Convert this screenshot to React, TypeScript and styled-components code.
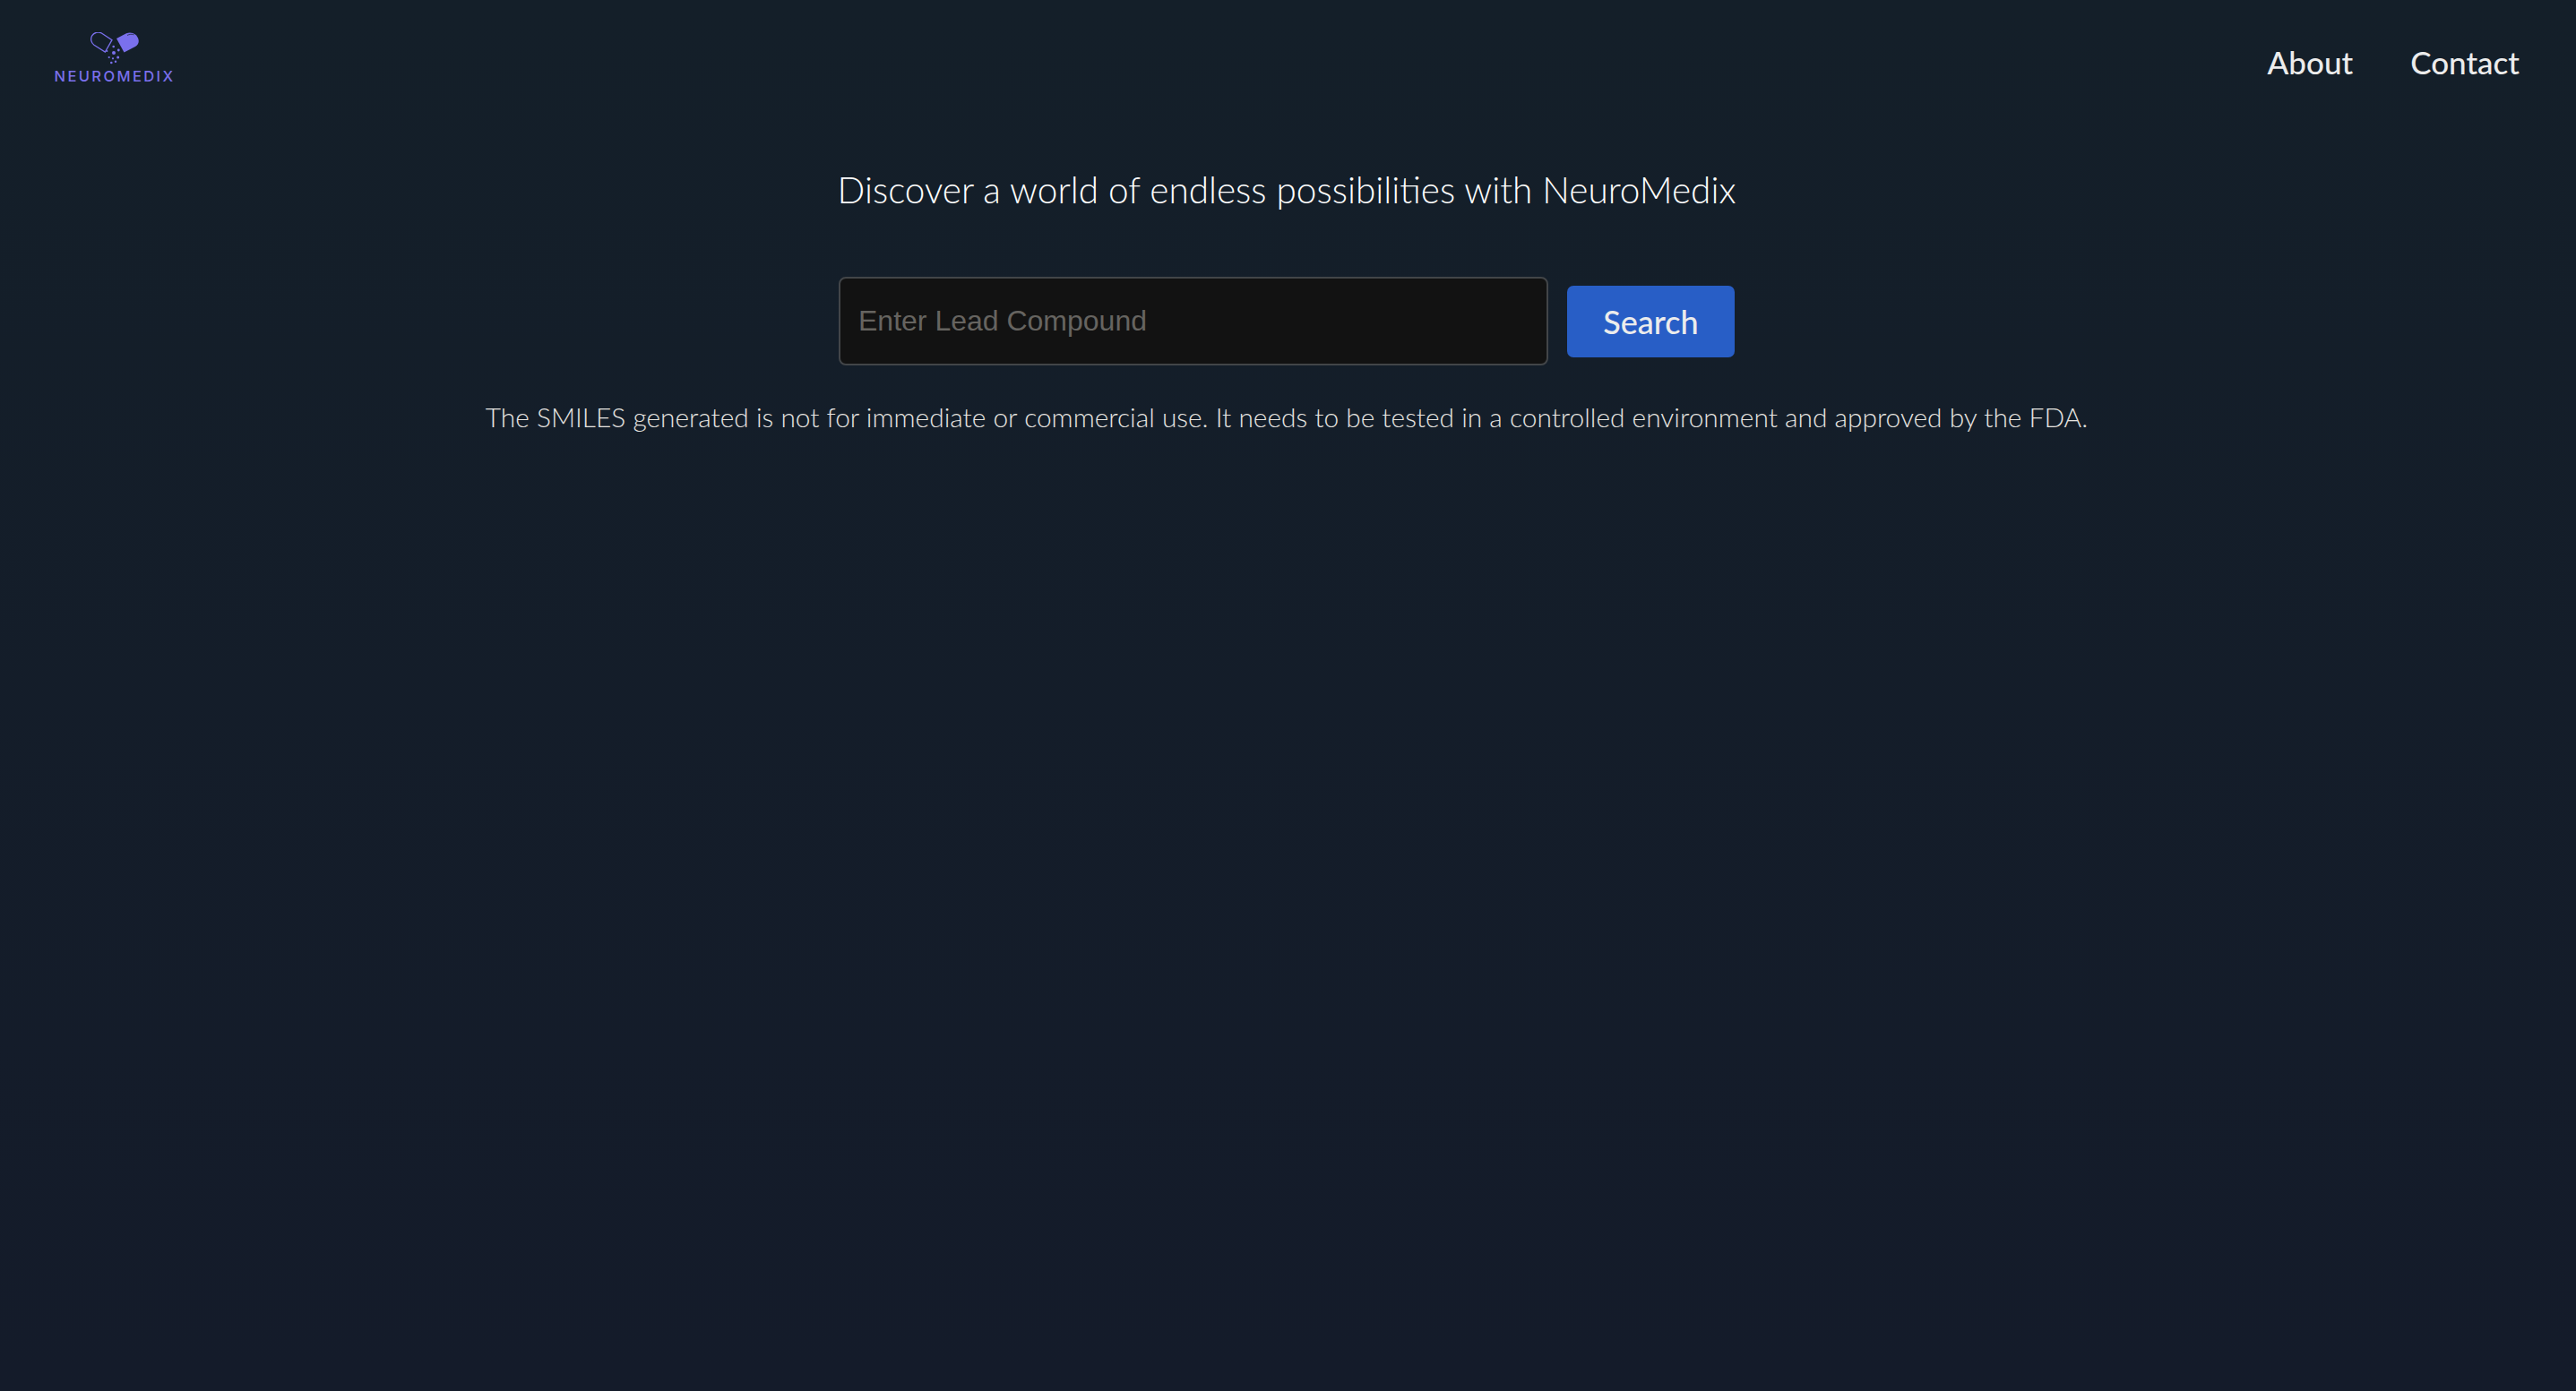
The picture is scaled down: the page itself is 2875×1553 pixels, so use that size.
import React from 'react';
import styled, { createGlobalStyle } from 'styled-components';

const GlobalStyle = createGlobalStyle`
  html, body {
    margin: 0;
    padding: 0;
  }
  body {
    background: #141c2a;
    font-family: 'Lato', 'Open Sans', sans-serif;
  }
`;

const Page = styled.div`
  width: 100vw;
  height: 100vh;
  overflow: hidden;
  display: flex;
  flex-direction: column;
  background: linear-gradient(180deg, #141f29 0%, #141b2a 100%);
`;

const Navbar = styled.nav`
  display: flex;
  justify-content: space-between;
  align-items: flex-start;
  height: 188px;
  padding: 36px 63px 0 60px;
  box-sizing: border-box;
`;

const Logo = styled.div`
  display: flex;
  flex-direction: column;
  align-items: center;
  gap: 5px;
  width: 136px;
`;

const LogoText = styled.span`
  font-family: 'Inter', sans-serif;
  font-size: 16.5px;
  line-height: 16px;
  font-weight: 500;
  letter-spacing: 2.4px;
  color: #7a70ec;
  white-space: nowrap;
`;

const NavLinks = styled.div`
  display: flex;
  gap: 64px;
  margin-top: 13px;
`;

const NavLink = styled.a`
  font-size: 35px;
  line-height: 40px;
  font-weight: 500;
  color: #ececec;
`;

const Main = styled.main`
  display: flex;
  flex-direction: column;
  align-items: center;
  padding-right: 3px;
`;

const Title = styled.h1`
  margin: 0 0 73px;
  font-size: 40.5px;
  line-height: 48px;
  font-weight: 300;
  color: #ffffff;
`;

const SearchRow = styled.form`
  display: flex;
  align-items: center;
  gap: 21px;
`;

const SearchInput = styled.input`
  width: 792px;
  height: 99px;
  box-sizing: border-box;
  padding: 0 20px;
  background: #121212;
  border: 2px solid #424548;
  border-radius: 8px;
  color: #eee;
  font-family: 'Liberation Sans', sans-serif;
  font-size: 32px;
  &::placeholder {
    color: #666460;
    opacity: 1;
  }
`;

const SearchButton = styled.button`
  width: 187px;
  height: 80px;
  background: #285ec6;
  border: none;
  border-radius: 7px;
  color: #ececec;
  font-family: inherit;
  font-size: 36px;
  font-weight: 500;
`;

const Notice = styled.p`
  margin: 39px 0 0;
  font-size: 29.88px;
  line-height: 38px;
  font-weight: 300;
  color: #e6e4e0;
`;

const CapsuleLogo = () => (
  <svg width="55" height="36" viewBox="0 0 55 36">
    <path
      d="M12.3 1 L24 8.7 L16.3 22 L4 14.3 A7.85 7.85 0 0 1 12.3 1 Z"
      fill="none"
      stroke="#7a70ec"
      strokeWidth="1.3"
    />
    <path
      d="M29 7 L40 1.2 C46 -1 52 2 53.5 8 C54.5 12 52.5 14.5 50 16 L37.5 22.5 Z"
      fill="#7a70ec"
    />
    <path d="M41 3.4 C43.5 2.2 46 2 48.5 2.8" fill="none" stroke="#141f29" strokeWidth="0.7" />
    <g fill="#7a70ec">
      <circle cx="25.7" cy="16" r="1.3" />
      <circle cx="31.3" cy="20" r="1.4" />
      <circle cx="18.3" cy="21" r="1.1" />
      <circle cx="26" cy="23" r="2" />
      <circle cx="20.7" cy="28" r="1.1" />
      <circle cx="25" cy="29.3" r="1.1" />
      <circle cx="30.7" cy="28" r="1.5" />
      <circle cx="28" cy="32.7" r="1.2" />
      <circle cx="23.3" cy="34" r="1.3" />
    </g>
  </svg>
);

const App: React.FC = () => {
  return (
    <Page>
      <GlobalStyle />
      <Navbar>
        <Logo>
          <CapsuleLogo />
          <LogoText>NEUROMEDIX</LogoText>
        </Logo>
        <NavLinks>
          <NavLink>About</NavLink>
          <NavLink>Contact</NavLink>
        </NavLinks>
      </Navbar>
      <Main>
        <Title>Discover a world of endless possibilities with NeuroMedix</Title>
        <SearchRow>
          <SearchInput placeholder="Enter Lead Compound" />
          <SearchButton type="button">Search</SearchButton>
        </SearchRow>
        <Notice>
          The SMILES generated is not for immediate or commercial use. It needs to be tested in a
          controlled environment and approved by the FDA.
        </Notice>
      </Main>
    </Page>
  );
};

export default App;
